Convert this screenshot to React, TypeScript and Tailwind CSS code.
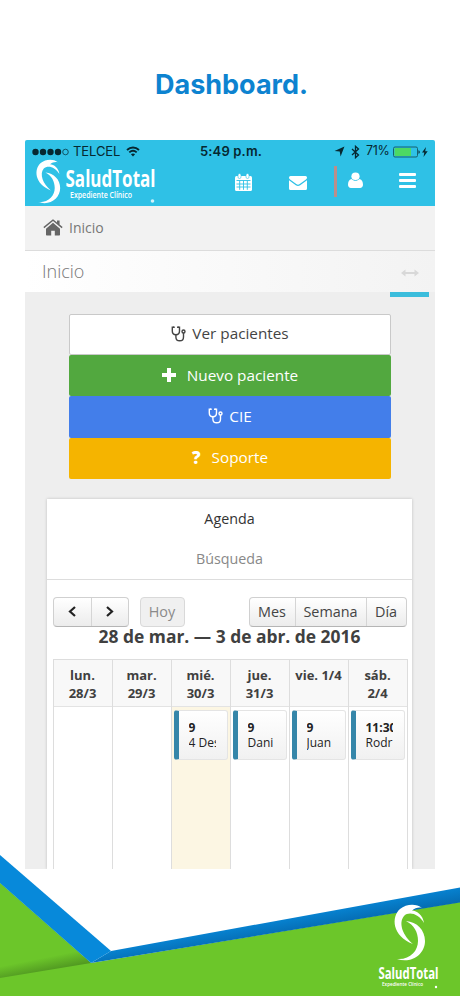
import type { ReactNode } from "react";

type Evento = { hora: string; nombre: string };
type Dia = { nombre: string; fecha: string; hoy?: boolean; evento?: Evento };

const dias: Dia[] = [
  { nombre: "lun.", fecha: "28/3" },
  { nombre: "mar.", fecha: "29/3" },
  { nombre: "mié.", fecha: "30/3", hoy: true, evento: { hora: "9", nombre: "4 Des" } },
  { nombre: "jue.", fecha: "31/3", evento: { hora: "9", nombre: "Dani" } },
  { nombre: "vie.", fecha: "1/4", evento: { hora: "9", nombre: "Juan" } },
  { nombre: "sáb.", fecha: "2/4", evento: { hora: "11:30", nombre: "Rodr" } },
];

function Swirl() {
  return (
    <g fill="#fff">
      <path d="M28 3C22-2 12-1 6 4-3 12-2 31 19 39 9 31 4 18 10 11c5-5 15-2 20 7C29 10 23 6 18 5.500 21 3 25 2 28 3Z" />
      <path d="M12 16C23 17 31 25 31 36 31 49 18 59 3 54 16 55 24 46 24 36 24 27 20 20 12 16Z" />
    </g>
  );
}

function Stethoscope() {
  return (
    <svg width="15" height="16" viewBox="0 0 15 16" fill="none" stroke="currentColor" strokeWidth="1.4">
      <path d="M3 1.2H1.3v3.9c0 2.3 1.5 3.7 3.6 3.7s3.6-1.4 3.6-3.7V1.2H6.8" />
      <path d="M4.9 8.8v2.1c0 2.3 1.5 3.9 3.8 3.9s3.8-1.6 3.8-3.9V7" />
      <circle cx="12.5" cy="5.5" r="1.5" />
      <path d="M2.9 .5v1.6M6.9 .5v1.6" strokeWidth="1.7" />
    </svg>
  );
}

function StatusBar() {
  return (
    <div className="flex h-[23px] items-center pl-[7px] pr-[5px] font-[Inter] text-[13px] text-[#062831]">
      <svg width="37" height="8" viewBox="0 0 37 8" fill="currentColor">
        <circle cx="3.5" cy="4" r="3.2" />
        <circle cx="11" cy="4" r="3.2" />
        <circle cx="18.5" cy="4" r="3.2" />
        <circle cx="26" cy="4" r="3.2" />
        <circle cx="33.5" cy="4" r="2.8" fill="none" stroke="currentColor" strokeWidth="0.7" />
      </svg>
      <span className="ml-[4px] w-[47px] whitespace-nowrap tracking-[-0.1px]">TELCEL</span>
      <svg className="ml-[6px]" width="14" height="11" viewBox="0 0 14 11" fill="none" stroke="currentColor" strokeWidth="1.9">
        <path d="M1 4c3.5-3.4 8.500-3.400 12 0M3.300 6.400c2.200-2 5.200-2 7.400 0" />
        <path d="M7 10.500 4.900 8.300c1.200-1.100 3-1.100 4.200 0Z" fill="currentColor" stroke="none" />
      </svg>
      <span className="ml-[60px] w-[63px] whitespace-nowrap font-semibold tracking-[0.15px]">5:49 p.m.</span>
      <svg className="ml-[71px]" width="11" height="11" viewBox="0 0 10 10" fill="currentColor">
        <path d="M9.500.5 6 9.500 5.200 5 .5 4.600Z" />
      </svg>
      <svg className="ml-[6px]" width="9" height="14" viewBox="0 0 9 14" fill="none" stroke="currentColor" strokeWidth="1.3">
        <path d="m1 4 6.500 6L4.500 12.700V1.300L7.500 4 1 10" />
      </svg>
      <span className="ml-[6px] w-[26px] whitespace-nowrap text-[12.500px] tracking-[-0.3px]">71%</span>
      <svg className="ml-px" width="36" height="12" viewBox="0 0 36 12">
        <rect x=".5" y="1" width="24" height="10" rx="1.5" fill="none" stroke="#17606f" />
        <rect x="1.500" y="2" width="16.500" height="8" rx=".5" fill="#4cd964" />
        <path d="M25.500 4.200c1.600.3 1.600 3.300 0 3.600Z" fill="#062831" />
        <path d="m33 1-4 5.500h2.300L30.500 11l4.200-5.800h-2.500Z" fill="#062831" />
      </svg>
    </div>
  );
}

function NavBar() {
  return (
    <div className="flex h-[43px] items-start">
      <svg width="130" height="43" viewBox="0 0 130 43" className="ml-[8px] shrink-0 overflow-visible">
        <g transform="translate(3 -3) scale(.78)">
          <Swirl />
        </g>
        <text x="32.500" y="24" fill="#fff" fontFamily="Open Sans" fontWeight="700" fontSize="22.500" textLength="90" lengthAdjust="spacingAndGlyphs">
          SaludTotal
        </text>
        <text x="37" y="35" fill="#fff" fontFamily="Open Sans" fontWeight="600" fontSize="9.500" textLength="62" lengthAdjust="spacingAndGlyphs">
          Expediente Clínico
        </text>
        <circle cx="119.500" cy="38" r="1.800" fill="#d3f2fa" />
      </svg>
      <svg className="ml-[72px] mt-[10px] shrink-0" width="17" height="18" viewBox="0 0 17 18">
        <rect y="3" width="17" height="15" rx="1.500" fill="#fff" />
        <path d="M1.500 7.500h14M1.500 11h14M1.500 14h14M4.700 7.500v9.300M8.500 7.500v9.300M12.300 7.500v9.300" stroke="#2fc1e6" strokeWidth=".9" />
        <rect x="3" y=".5" width="3" height="5" rx="1.500" fill="#fff" stroke="#2fc1e6" strokeWidth=".6" />
        <rect x="11" y=".5" width="3" height="5" rx="1.500" fill="#fff" stroke="#2fc1e6" strokeWidth=".6" />
      </svg>
      <svg className="ml-[37px] mt-[13px] shrink-0" width="18" height="14" viewBox="0 0 18 14" fill="#fff">
        <path d="M1.500 0h15A1.500 1.500 0 0 1 18 1.500c0 1-.6 1.700-1.400 2.300L10.700 8c-1.300.9-2.100.9-3.400 0L1.400 3.800C.6 3.200 0 2.500 0 1.500A1.500 1.500 0 0 1 1.500 0Z" />
        <path d="M0 4.300 6.800 9.200c1.600 1.100 2.800 1.100 4.400 0L18 4.300v8.200a1.500 1.500 0 0 1-1.500 1.500h-15A1.500 1.500 0 0 1 0 12.500Z" />
      </svg>
      <div className="ml-[27px] mt-[3px] h-[31px] w-[3px] shrink-0 bg-[#bb8e8b]" />
      <svg className="ml-[11px] mt-[9px] shrink-0" width="15" height="16" viewBox="0 0 15 17" preserveAspectRatio="none" fill="#fff">
        <circle cx="7.500" cy="4.500" r="4.100" />
        <path d="M3.500 7.500C1 8 0 10.500 0 13.500 0 15.500 1.200 17 3 17h9c1.800 0 3-1.500 3-3.500 0-3-1-5.500-3.500-6-1 1.200-2.400 1.900-4 1.900s-3-.7-4-1.900Z" />
      </svg>
      <div className="ml-[36px] mt-[10px] flex w-[17px] flex-col gap-[3px]">
        <div className="h-[3px] rounded-[1px] bg-white" />
        <div className="h-[3px] rounded-[1px] bg-white" />
        <div className="h-[3px] rounded-[1px] bg-white" />
      </div>
    </div>
  );
}

function Accion({ className, children }: { className: string; children: ReactNode }) {
  return (
    <button className={`flex h-[41.4px] w-full items-center justify-center rounded-[2px] pb-px text-[15.3px] ${className}`}>
      {children}
    </button>
  );
}

function Toolbar() {
  const grupo = "flex h-[30px] rounded-[4px] border border-[#d0d0d0] border-b-[#b5b5b5] bg-linear-to-b from-white to-[#ececec]";
  return (
    <div className="flex px-[5.5px] pt-[17px] text-[14.400px] text-[#444]">
      <div className={grupo}>
        <button className="flex w-[38px] items-center justify-center border-r border-[#d5d5d5]">
          <svg width="8" height="11" viewBox="0 0 8 11" fill="none" stroke="#222" strokeWidth="2.2">
            <path d="M7 1 2 5.500 7 10" />
          </svg>
        </button>
        <button className="flex w-[36px] items-center justify-center">
          <svg width="8" height="11" viewBox="0 0 8 11" fill="none" stroke="#222" strokeWidth="2.2">
            <path d="m1 1 5 4.500L1 10" />
          </svg>
        </button>
      </div>
      <button className="ml-[11px] h-[30px] w-[45px] rounded-[4px] border border-[#d9d9d9] bg-[#f0f0f0] text-[#8a8a8a]">Hoy</button>
      <div className={`${grupo} ml-auto`}>
        <button className="w-[46px] border-r border-[#d5d5d5]">Mes</button>
        <button className="w-[71px] border-r border-[#d5d5d5]">Semana</button>
        <button className="w-[39px]">Día</button>
      </div>
    </div>
  );
}

function Calendario() {
  return (
    <div className="ml-[5.5px] mr-[4.5px] mt-[9px] grid flex-1 grid-cols-6 border-l border-t border-[#ddd]">
      {dias.map((dia) => (
        <div key={dia.nombre} className="flex min-w-0 flex-col border-r border-[#ddd]">
          <div className="h-[47px] border-b border-[#e3e3e3] bg-[#f8f8f8] pt-[6px] text-center text-[13px] font-bold leading-[18.5px] text-[#404040]">
            {dia.nombre} {dia.nombre !== "vie." && <br />}
            {dia.fecha}
          </div>
          <div className={`flex-1 px-[2px] pt-[3px] ${dia.hoy ? "bg-[#fcf6e3]" : ""}`}>
            {dia.evento && (
              <div className="h-[50px] overflow-hidden rounded-[3px] border border-l-[5px] border-[#e4e4e4] border-l-[#3586a9] bg-linear-to-b from-white to-[#f1f1f1] pl-[10px] pr-[11px] pt-[9px] text-[12px] leading-[15px] text-[#222]">
                <div className="overflow-hidden whitespace-nowrap font-bold">{dia.evento.hora}</div>
                <div className="overflow-hidden whitespace-nowrap font-medium">{dia.evento.nombre}</div>
              </div>
            )}
          </div>
        </div>
      ))}
    </div>
  );
}

function Footer() {
  return (
    <svg className="-mt-[14px] block" width="460" height="141" viewBox="0 0 460 141">
      <defs>
        <linearGradient id="franja" gradientUnits="userSpaceOnUse" x1="270" y1="62" x2="274" y2="84">
          <stop offset="0" stopColor="#0789da" />
          <stop offset="1" stopColor="#0567ab" />
        </linearGradient>
        <linearGradient id="pliegue" gradientUnits="userSpaceOnUse" x1="43" y1="103" x2="46" y2="118">
          <stop offset="0" stopColor="#6cc62a" />
          <stop offset="1" stopColor="#4e9420" />
        </linearGradient>
      </defs>
      <path d="M0 28 91 108 460 47V141H0Z" fill="#6cc62a" />
      <path d="M0 28 91 108 0 123Z" fill="url(#pliegue)" />
      <path d="M111 96 460 32.500V47.500L91 108Z" fill="url(#franja)" />
      <path d="M0 0 111 96 91 108 0 28Z" fill="#0789da" />
      <g transform="translate(394 50)">
        <Swirl />
      </g>
      <text x="378.500" y="124" fill="#fff" fontFamily="Open Sans" fontWeight="700" fontSize="15.500" textLength="60" lengthAdjust="spacingAndGlyphs">
        SaludTotal
      </text>
      <text x="382" y="130.500" fill="#fff" fontFamily="Open Sans" fontWeight="600" fontSize="6" textLength="41" lengthAdjust="spacingAndGlyphs">
        Expediente Clínico
      </text>
      <circle cx="436" cy="132" r="1.200" fill="#fff" />
    </svg>
  );
}

export default function App() {
  return (
    <main className="flex h-[996px] w-[460px] flex-col overflow-hidden bg-white font-['Open_Sans',sans-serif]">
      <h1 className="h-[140px] pt-[67px] pl-[3px] text-center font-[Inter] text-[27px] font-bold leading-[36px] text-[#0d83d0]">
        Dashboard.
      </h1>
      <div className="mx-[25px] flex h-[729px] w-[410px] flex-col overflow-hidden rounded-t-[2px] bg-[#eeeeee]">
        <header className="h-[66px] shrink-0 bg-[#2fc1e6]">
          <StatusBar />
          <NavBar />
        </header>
        <div className="flex h-[45px] shrink-0 items-center border-b border-[#dcdcdc] bg-[#f2f2f2] pb-[2px] pl-[18px] text-[14px] text-[#777]">
          <svg width="20" height="17" viewBox="0 0 20 17" fill="#666">
            <path d="M10 3.800 3 9.700v5.800c0 .6.400 1 1 1h4.200v-4.800h3.600v4.800H16c.6 0 1-.4 1-1V9.700Z" />
            <path d="M14 1.500h2.600v4.100l3 2.500-.9 1.100L10 2 1.300 9.200.4 8.100 9 .9c.6-.5 1.400-.5 2 0l3 2.500Z" />
          </svg>
          <span className="ml-[6px]">Inicio</span>
        </div>
        <div className="flex h-[41px] shrink-0 items-center justify-between bg-linear-to-r from-white to-[#f3f3f3] pl-[17px] pr-[16px]">
          <h2 className="text-[18px] font-light text-[#777]">Inicio</h2>
          <svg className="mt-[2px]" width="18" height="8" viewBox="0 0 18 8" fill="#d8d8d8">
            <path d="M0 4 4.500.500V3h9V.500L18 4l-4.500 3.500V5h-9v2.500Z" />
          </svg>
        </div>
        <div className="ml-auto mr-[6px] h-[5px] w-[39px] shrink-0 bg-[#3bbddc]" />
        <div className="mx-[44px] mt-[16.500px] shrink-0">
          <Accion className="border border-[#c9c9c9] bg-white text-[#444]">
            <Stethoscope />
            <span className="ml-[6px]">Ver pacientes</span>
          </Accion>
          <Accion className="bg-[#52a83f] text-white">
            <svg width="14" height="14" viewBox="0 0 14 14" fill="#fff">
              <path d="M5 0h4v5h5v4H9v5H5V9H0V5h5Z" />
            </svg>
            <span className="ml-[11px]">Nuevo paciente</span>
          </Accion>
          <Accion className="bg-[#437eea] text-white">
            <Stethoscope />
            <span className="ml-[6px]">CIE</span>
          </Accion>
          <Accion className="bg-[#f5b400] text-white">
            <span className="text-[17px] font-extrabold">?</span>
            <span className="ml-[11px]">Soporte</span>
          </Accion>
        </div>
        <section className="ml-[22px] mt-[19.500px] flex w-[365px] flex-1 flex-col bg-white shadow-[0_0_3px_rgba(0,0,0,0.2)]">
          <div className="flex h-[40px] items-center justify-center text-[14.300px] text-[#333]">Agenda</div>
          <div className="flex h-[41px] items-center justify-center border-b border-[#ddd] text-[14.300px] text-[#888]">Búsqueda</div>
          <Toolbar />
          <h3 className="-mt-[3px] h-[26px] whitespace-nowrap text-center text-[17.400px] font-bold leading-[24px] text-[#404040]">
            28 de mar. — 3 de abr. de 2016
          </h3>
          <Calendario />
        </section>
      </div>
      <Footer />
    </main>
  );
}
